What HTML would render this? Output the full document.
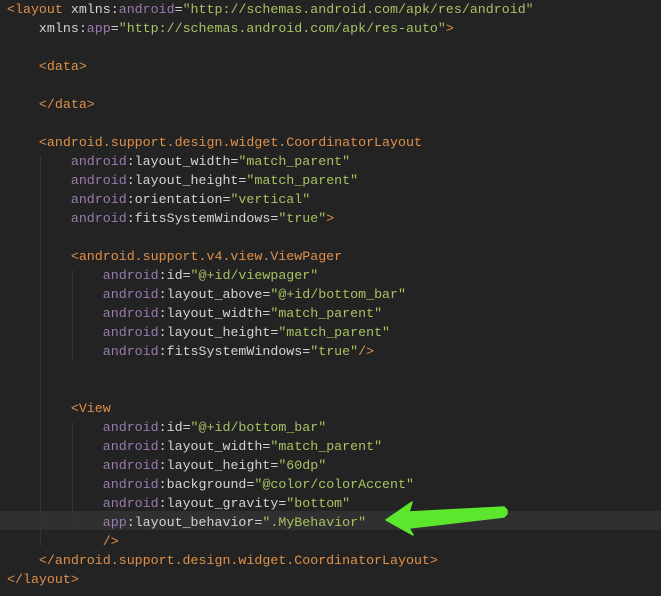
<!DOCTYPE html><html><head><style>
body{margin:0;width:661px;height:596px;background:#232323;overflow:hidden;position:relative}
pre{margin:0;position:absolute;left:7px;top:0;font:13.3px/19px "Liberation Mono",monospace;color:#d4d4d4;white-space:pre}
.t{color:#e0904a}.n{color:#9a7bb0}.v{color:#a8c262}
.hl{position:absolute;left:0;top:511px;width:661px;height:19px;background:#303030}
</style></head><body>
<div class="hl"></div>
<pre><span class="t">&lt;layout</span> xmlns:<span class="n">android</span>=<span class="v">"http://schemas.android.com/apk/res/android"</span>
    xmlns:<span class="n">app</span>=<span class="v">"http://schemas.android.com/apk/res-auto"</span><span class="t">&gt;</span>

    <span class="t">&lt;data&gt;</span>

    <span class="t">&lt;/data&gt;</span>

    <span class="t">&lt;android.support.design.widget.CoordinatorLayout</span>
        <span class="n">android</span>:layout_width=<span class="v">"match_parent"</span>
        <span class="n">android</span>:layout_height=<span class="v">"match_parent"</span>
        <span class="n">android</span>:orientation=<span class="v">"vertical"</span>
        <span class="n">android</span>:fitsSystemWindows=<span class="v">"true"</span><span class="t">&gt;</span>

        <span class="t">&lt;android.support.v4.view.ViewPager</span>
            <span class="n">android</span>:id=<span class="v">"@+id/viewpager"</span>
            <span class="n">android</span>:layout_above=<span class="v">"@+id/bottom_bar"</span>
            <span class="n">android</span>:layout_width=<span class="v">"match_parent"</span>
            <span class="n">android</span>:layout_height=<span class="v">"match_parent"</span>
            <span class="n">android</span>:fitsSystemWindows=<span class="v">"true"</span><span class="t">/&gt;</span>


        <span class="t">&lt;View</span>
            <span class="n">android</span>:id=<span class="v">"@+id/bottom_bar"</span>
            <span class="n">android</span>:layout_width=<span class="v">"match_parent"</span>
            <span class="n">android</span>:layout_height=<span class="v">"60dp"</span>
            <span class="n">android</span>:background=<span class="v">"@color/colorAccent"</span>
            <span class="n">android</span>:layout_gravity=<span class="v">"bottom"</span>
            <span class="n">app</span>:layout_behavior=<span class="v">".MyBehavior"</span>
            <span class="t">/&gt;</span>
    <span class="t">&lt;/android.support.design.widget.CoordinatorLayout&gt;</span>
<span class="t">&lt;/layout&gt;</span></pre>
<svg style="position:absolute;left:0;top:0" width="661" height="596">
<g stroke="#333" stroke-width="1">
<line x1="40.5" y1="156" x2="40.5" y2="546"/><line x1="72.5" y1="270" x2="72.5" y2="360"/><line x1="72.5" y1="422" x2="72.5" y2="530"/>
</g>
<polygon points="386,520 412,502 409,512 504,507 507,510 507,514 504,517 409,528 413,535" fill="#5ce62e" stroke="#5ce62e" stroke-width="1.5" stroke-linejoin="round"/>
</svg>
</body></html>
